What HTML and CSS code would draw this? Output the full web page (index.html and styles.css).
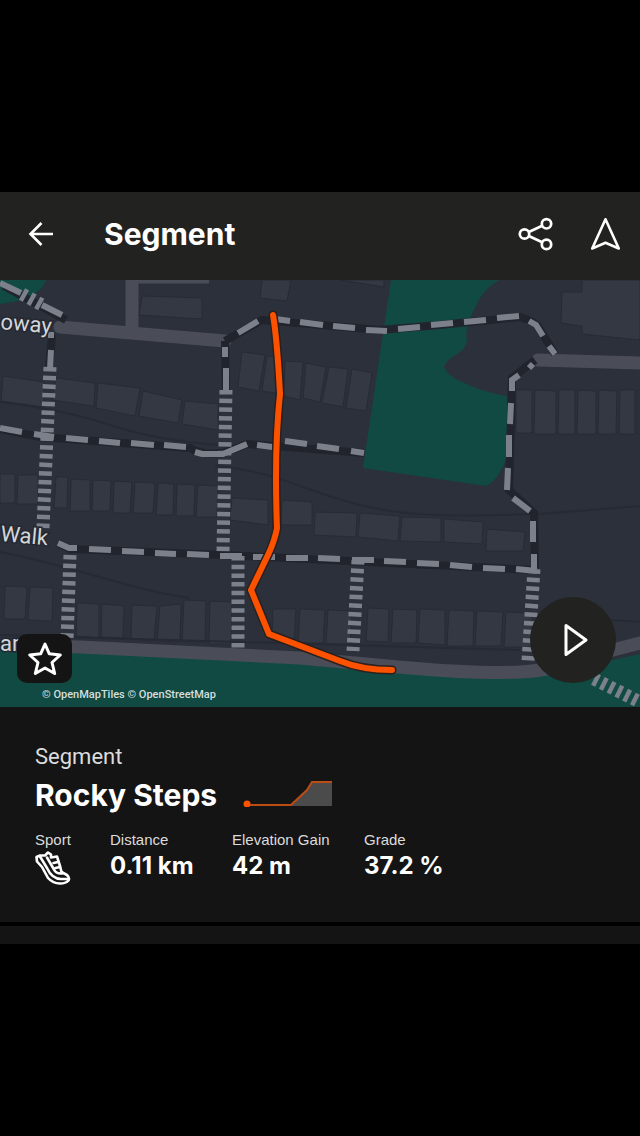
FILE: index.html
```
<!DOCTYPE html>
<html lang="en">
<head>
  <meta charset="UTF-8">
  <meta name="viewport" content="width=device-width, initial-scale=1.0">
  <title>Segment - Rocky Steps</title>
  <link rel="stylesheet" href="styles.css">
</head>
<body>
  <div class="screen">
    <header class="top-bar">
      <button type="button" class="icon-btn" aria-label="Back">
        <svg width="26" height="26" viewBox="0 0 26 26" fill="none" stroke="#fff" stroke-width="2.6">
          <path d="M25 13H3M13.500 2L2.500 13l11 11"/>
        </svg>
      </button>
      <h1>Segment</h1>
      <button type="button" class="icon-btn" aria-label="Share">
        <svg width="36" height="34" viewBox="0 0 36 34" fill="none" stroke="#fff" stroke-width="2.7">
          <circle cx="6.500" cy="17" r="4.700"/>
          <circle cx="28.500" cy="6.800" r="4.700"/>
          <circle cx="28.500" cy="27.400" r="4.700"/>
          <path d="M10.800 15L24.200 8.800M10.800 19l13.400 6.300"/>
        </svg>
      </button>
      <button type="button" class="icon-btn" aria-label="Navigate">
        <svg width="32" height="34" viewBox="0 0 32 34" fill="none" stroke="#fff" stroke-width="2.6" stroke-linejoin="round">
          <path d="M15.500 2.300L28.800 31.500L15.500 25.800L2.200 31.500z"/>
        </svg>
      </button>
    </header>

    <div class="map">
      <svg class="map-canvas" viewBox="0 280 640 427" role="img" aria-label="Segment map">
        <rect class="land" x="0" y="280" width="640" height="427"/>

        <!-- parks -->
        <path class="park" d="M0 280H46Q40 299 0 304z"/>
        <path class="park" d="M391 280H499Q482 290 475 308Q464 327 467 341Q465 351 452 357Q444 364 444 367Q449 377 462 382Q483 392 507 396V455Q501 478 486 486L363 468z"/>
        <path class="park" d="M0 645L300 663L540 676L640 654V707H0z"/>

        <!-- buildings -->
        <g class="building">
          <path d="M142 296L202 298V319L139 315zM262 280H291L287 301L260 298zM340 280H384V287z"/>
          <path d="M562 292H582V280H640V340L582 334V326L561 323z"/>
          <path d="M3 376L44 382V407L1 401zM56 378L95 383L94 406L52 400zM98 383L140 388L135 416L96 408zM143 391L182 400L178 423L139 416zM185 401L218 404V430L182 424z"/>
          <path d="M242 352L265 355L259 391L238 387zM267 356L276 357V393L262 391zM285 361L303 362L300 400L284 396zM306 363L326 367L320 402L303 398zM329 367L348 369L343 407L322 403zM352 369L372 373L366 411L346 408z"/>
          <path d="M516 390H532V433H516zM535 390L556 391V434H534zM559 390H575V434H558zM578 390L596 391V434H577zM599 390L617 391L616 434H598zM620 390H635V434H619zM638 390H640V434H638z"/>
          <path d="M0 474H15V503H0zM18 475H38V504H17zM56 477H68L67 508H54zM71 479L90 480V511H70zM93 480L111 481L110 511H92zM114 481L132 482L130 513H113zM135 482L155 483L153 513H133zM158 483L174 484L173 515H156zM177 484L195 485L194 516H176zM198 485L218 486L217 517H196z"/>
          <path d="M232 498L268 500V525L230 520zM282 500L312 502V525H281zM315 512L357 513L356 537L314 535zM360 513L400 516L398 541L358 537zM402 517L441 518V542L400 541zM444 519L483 522L482 544L444 542zM487 529L525 532L523 551H486z"/>
          <path d="M5 586L27 587L25 619H4zM30 587L53 588L52 621L28 620zM77 603L99 604V638L76 636zM102 604L124 606L123 638L101 637zM132 605L157 606L154 641L131 639zM160 606L181 604L180 642L157 641zM184 600L206 601L205 642L182 641zM210 601L232 602L231 644H209z"/>
          <path d="M273 609L296 609L294 642L272 640zM300 609L325 610L323 643H298zM328 610L352 611L350 644H326zM368 608L389 609L388 642L366 641zM393 609L417 610L416 643H391zM420 609L445 610V645L418 643zM449 610L474 611L473 646H447zM477 611L503 612L501 646H475zM506 612L532 613V647H504z"/>
        </g>
        <path class="contour" d="M0 402Q65 410 110 425T218 445M0 552C70 565 130 590 190 598M215 466C280 472 300 490 360 505S480 515 540 514L640 506M0 635L520 650M610 620L640 622"/>

        <!-- roads -->
        <path class="road" d="M132 277H209M132 277V328"/>
        <path class="road wide" d="M60 327L225 341"/>
        <path class="road wide" d="M538 360L640 363"/>
        <path class="road wide" d="M20 645L80 647L300 658L410 668Q480 674 520 672Q545 671 565 664T640 643"/>

        <!-- footpaths -->
        <path class="path-case" d="M4 286L66 320M52 335L49 370M0 429L40 437L190 448Q200 455 223 453L247 444L364 453M225 341L226 392M225 341L262 320L380 330L440 325L520 317Q536 322 539 328L555 354M535 360L512 378L509 490L534 513L535 570M58 543L70 549L225 555L535 570"/>
        <path class="path" d="M0 283L21 293M42 305L62 315"/>
        <path class="path" d="M51 332V338M51 350L50 369"/>
        <path class="path" d="M0 428L22 432M34 434L54 437M66 438L88 440M99 441L120 443M131 443L154 445M164 445L186 447M195 452L202 454H223L247 444M257 445L280 448M285 441L307 444M317 446L339 449M351 451L364 453"/>
        <path class="path" d="M225 347V357M226 368V391M238 333L258 321M275 319L290 321M300 322L323 325M333 326L355 328M366 330L387 331M398 329L420 327M431 325L453 323M464 322L486 320M497 318L519 316M529 321L536 325L543 336M549 346L555 354"/>
        <path class="path" d="M533 364L529 368M519 375L512 380V391M511 403L510 424M509 435V457M508 468L507 490M513 498L530 511M533 521V542M534 554V570"/>
        <path class="path" d="M58 543L69 548H77M89 549L111 550M122 551L144 552M155 553L176 554M187 554L209 555M220 556H242M253 557L275 557M286 558L308 558M318 558L340 559M352 560L374 560M384 561L406 562M417 563L439 564M450 565L472 567M483 568L505 569M516 569L537 571"/>

        <!-- steps -->
        <path class="steps" d="M50 367L43 528"/>
        <path class="steps" d="M226 390L223 553"/>
        <path class="steps" d="M70 555L67 640"/>
        <path class="steps" d="M238 556V648"/>
        <path class="steps" d="M358 560L353 651"/>
        <path class="steps" d="M534 569L528 661"/>
        <path class="steps" d="M594 679L640 702"/>
        <path class="steps" d="M22 294L44 306"/>

        <g class="street">
          <text x="0" y="329" transform="rotate(5 0 329)">oway</text>
          <text x="0" y="541" transform="rotate(5 0 541)">Walk</text>
          <text x="0" y="651">ar</text>
        </g>

        <path class="track-case" d="M273 315Q277 338 280 394Q274 450 277 528Q275 540 268 555L251 590L269 634L340 661Q362 670 392 670"/>
        <path class="track" d="M273 315Q277 338 280 394Q274 450 277 528Q275 540 268 555L251 590L269 634L340 661Q362 670 392 670"/>
      </svg>

      <button type="button" class="star-btn" aria-label="Star segment">
        <svg width="36" height="36" viewBox="0 0 36 36" fill="none" stroke="#fff" stroke-width="3" stroke-linejoin="round">
          <path d="M18 3L22.300 12.800L33.300 14L25 21.500L27.700 32.500L18 27L8.300 32.500L11 21.500L2.700 14L13.700 12.800z"/>
        </svg>
      </button>
      <p class="credits"><a href="#">© OpenMapTiles</a> <a href="#">© OpenStreetMap</a></p>
      <button type="button" class="play-btn" aria-label="Play">
        <svg width="26" height="34" viewBox="0 0 26 34" fill="none" stroke="#fff" stroke-width="3" stroke-linejoin="round">
          <path d="M3 2.500L23 17L3 31.500z"/>
        </svg>
      </button>
    </div>

    <section class="details">
      <p class="kind">Segment</p>
      <div class="title-row">
        <h2>Rocky Steps</h2>
        <svg width="90" height="28" viewBox="0 0 90 28" aria-hidden="true">
          <path fill="#4b4b4b" d="M48 26L64 11L69 3H89V27H48z"/>
          <path fill="none" stroke="#bd4c14" stroke-width="2" d="M4 26H48L64 11L69 3H89"/>
          <circle cx="4" cy="25" r="3.500" fill="#fc5200"/>
        </svg>
      </div>
      <dl class="stats">
        <div>
          <dt>Sport</dt>
          <dd>
            <svg width="36" height="34" viewBox="0 0 36 34" fill="none" stroke="#fff" stroke-width="2.6" stroke-linejoin="round" stroke-linecap="round" role="img" aria-label="Run">
              <path d="M1.500 6L5 4.500L10 4.500L13 1.500L16 3.500V6.500L22 5.500L25 15L26.500 21L32 24Q35 27 33.500 29.500Q31 32.500 25 32.500Q18 32.500 13 27L7 16L2 10.500z"/>
              <path d="M5 5.500L12 17Q17 28 26 28H33M12 6.500L19 18.500Q21 23 27 22.500M18.500 12L23 11M20.500 17L25 16"/>
            </svg>
          </dd>
        </div>
        <div>
          <dt>Distance</dt>
          <dd>0.11 km</dd>
        </div>
        <div>
          <dt>Elevation Gain</dt>
          <dd>42 m</dd>
        </div>
        <div>
          <dt>Grade</dt>
          <dd>37.2 %</dd>
        </div>
      </dl>
    </section>
    <section class="next-card"></section>
  </div>
</body>
</html>
```
FILE: styles.css
```
* {
  box-sizing: border-box;
}

body {
  margin: 0;
  min-height: 100vh;
  background-color: #000;
  color: #fff;
  font-family: Roboto, "Liberation Sans", sans-serif;
  display: flex;
  align-items: center;
}

.screen {
  width: 100%;
}

h1, h2, p, dl, dd {
  margin: 0;
}

button {
  border: none;
  padding: 0;
  cursor: pointer;
  display: flex;
  align-items: center;
  justify-content: center;
}

svg {
  display: block;
}

.top-bar {
  display: flex;
  align-items: center;
  gap: 36px;
  padding: 20px 18px 24px 28px;
  background-color: #222220;
}

.top-bar h1 {
  flex: 1;
  margin-left: 14px;
  font-family: Inter, sans-serif;
  font-size: 30px;
  line-height: 44px;
  font-weight: 700;
}

.icon-btn {
  background: none;
}

.map {
  position: relative;
}

.map-canvas {
  width: 100%;
  height: auto;
}

.land {
  fill: #2b303b;
}

.park {
  fill: #114a43;
}

.building {
  fill: #333843;
  stroke: #272b35;
  stroke-width: 1;
}

.contour {
  fill: none;
  stroke: #262a34;
  stroke-width: 2;
}

.road {
  fill: none;
  stroke: #4a4c58;
  stroke-width: 13;
  stroke-linejoin: round;
}

.road.wide {
  stroke-linecap: round;
}

.path, .path-case {
  fill: none;
  stroke: #7c808b;
  stroke-width: 6;
}

.path-case {
  stroke: #21242c;
  stroke-width: 8;
}

.steps {
  fill: none;
  stroke: #7c808b;
  stroke-width: 13;
  stroke-dasharray: 4.5 4.2;
}

.street {
  fill: #d5d6d8;
  stroke: #242832;
  stroke-width: 3;
  paint-order: stroke;
  font-size: 22px;
}

.track, .track-case {
  fill: none;
  stroke: #fc5200;
  stroke-width: 6;
  stroke-linecap: round;
  stroke-linejoin: round;
}

.track-case {
  stroke: #2a211e;
  stroke-width: 9;
}

.star-btn {
  position: absolute;
  left: 17px;
  bottom: 24px;
  width: 55px;
  height: 49px;
  border-radius: 10px;
  background-color: #141414;
}

.play-btn {
  position: absolute;
  right: 24px;
  bottom: 24px;
  width: 86px;
  height: 86px;
  padding-left: 6px;
  border-radius: 50%;
  background-color: #222220;
}

.credits {
  position: absolute;
  left: 42px;
  bottom: 4px;
  font-size: 11px;
  line-height: 16px;
  font-weight: 500;
}

.credits a {
  color: #d5dfdd;
  text-decoration: none;
}

.details {
  padding: 36px 35px 37px;
  background-color: #141414;
}

.kind {
  font-size: 22px;
  line-height: 28px;
  color: #dcdcdc;
}

.title-row {
  display: flex;
  align-items: center;
  gap: 26px;
}

.title-row svg {
  margin-bottom: 4px;
}

.title-row h2 {
  font-family: Inter, sans-serif;
  font-size: 30px;
  line-height: 48px;
  font-weight: 700;
}

.stats {
  display: grid;
  grid-template-columns: 75px 122px 132px auto;
  margin-top: 10px;
}

.stats dt {
  font-family: "Liberation Sans", Arial, sans-serif;
  font-size: 15px;
  line-height: 22px;
  color: #dcdcdc;
}

.stats dd {
  font-family: Inter, sans-serif;
  font-size: 24px;
  line-height: 30px;
  font-weight: 700;
}

.next-card {
  height: 18px;
  margin-top: 4px;
  background-color: #141414;
}
```
